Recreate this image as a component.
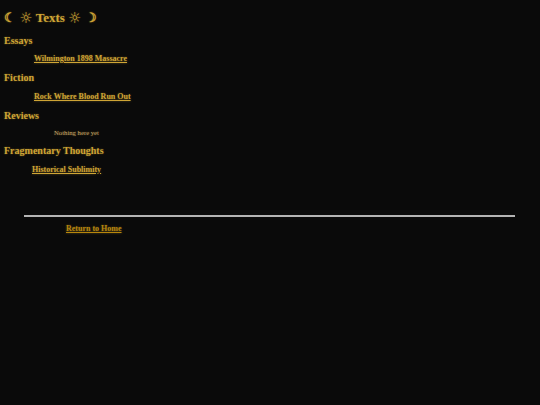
export default function App() {
  return (
    <div className="min-h-[405px] w-[540px] bg-[#0a0a0a] font-['Liberation_Serif',serif] text-[#cfa535] [text-shadow:0_0_2px_rgba(207,165,53,0.45)]">
      <div className="pl-[4px] pt-[11px]">
        <div className="h-[14px] text-[13px] font-bold leading-[14px] whitespace-nowrap">
          ☾ <span className="font-['DejaVu_Sans',sans-serif] text-[15px] font-normal leading-[14px] align-[-1px]">☼</span> Texts{" "}
          <span className="font-['DejaVu_Sans',sans-serif] text-[15px] font-normal leading-[14px] align-[-1px]">☼</span> ☽
        </div>
        <div className="mt-[11px] text-[10px] font-bold leading-[10px]">Essays</div>
        <div className="mt-[8px] pl-[30px] text-[8px] font-bold leading-[10px]">
          <a className="underline">Wilmington 1898 Massacre</a>
        </div>
        <div className="mt-[9px] text-[10px] font-bold leading-[10px]">Fiction</div>
        <div className="mt-[9px] pl-[30px] text-[8px] font-bold leading-[10px]">
          <a className="underline">Rock Where Blood Run Out</a>
        </div>
        <div className="mt-[9px] text-[10px] font-bold leading-[10px]">Reviews</div>
        <div className="mt-[7px] pl-[50px] text-[6.7px] leading-[10px] text-[#c4a46a]">Nothing here yet</div>
        <div className="mt-[8px] text-[10px] font-bold leading-[10px]">Fragmentary Thoughts</div>
        <div className="mt-[9px] pl-[28px] text-[8px] font-bold leading-[10px]">
          <a className="underline">Historical Sublimity</a>
        </div>
      </div>
      <div className="mx-[24px] mt-[40px] h-[2px] w-[491px] bg-[#b4b4b4]" />
      <div className="mt-[7px] pl-[66px] text-[8px] font-bold leading-[10px] text-[#b8860b]">
        <a className="underline">Return to Home</a>
      </div>
    </div>
  );
}
